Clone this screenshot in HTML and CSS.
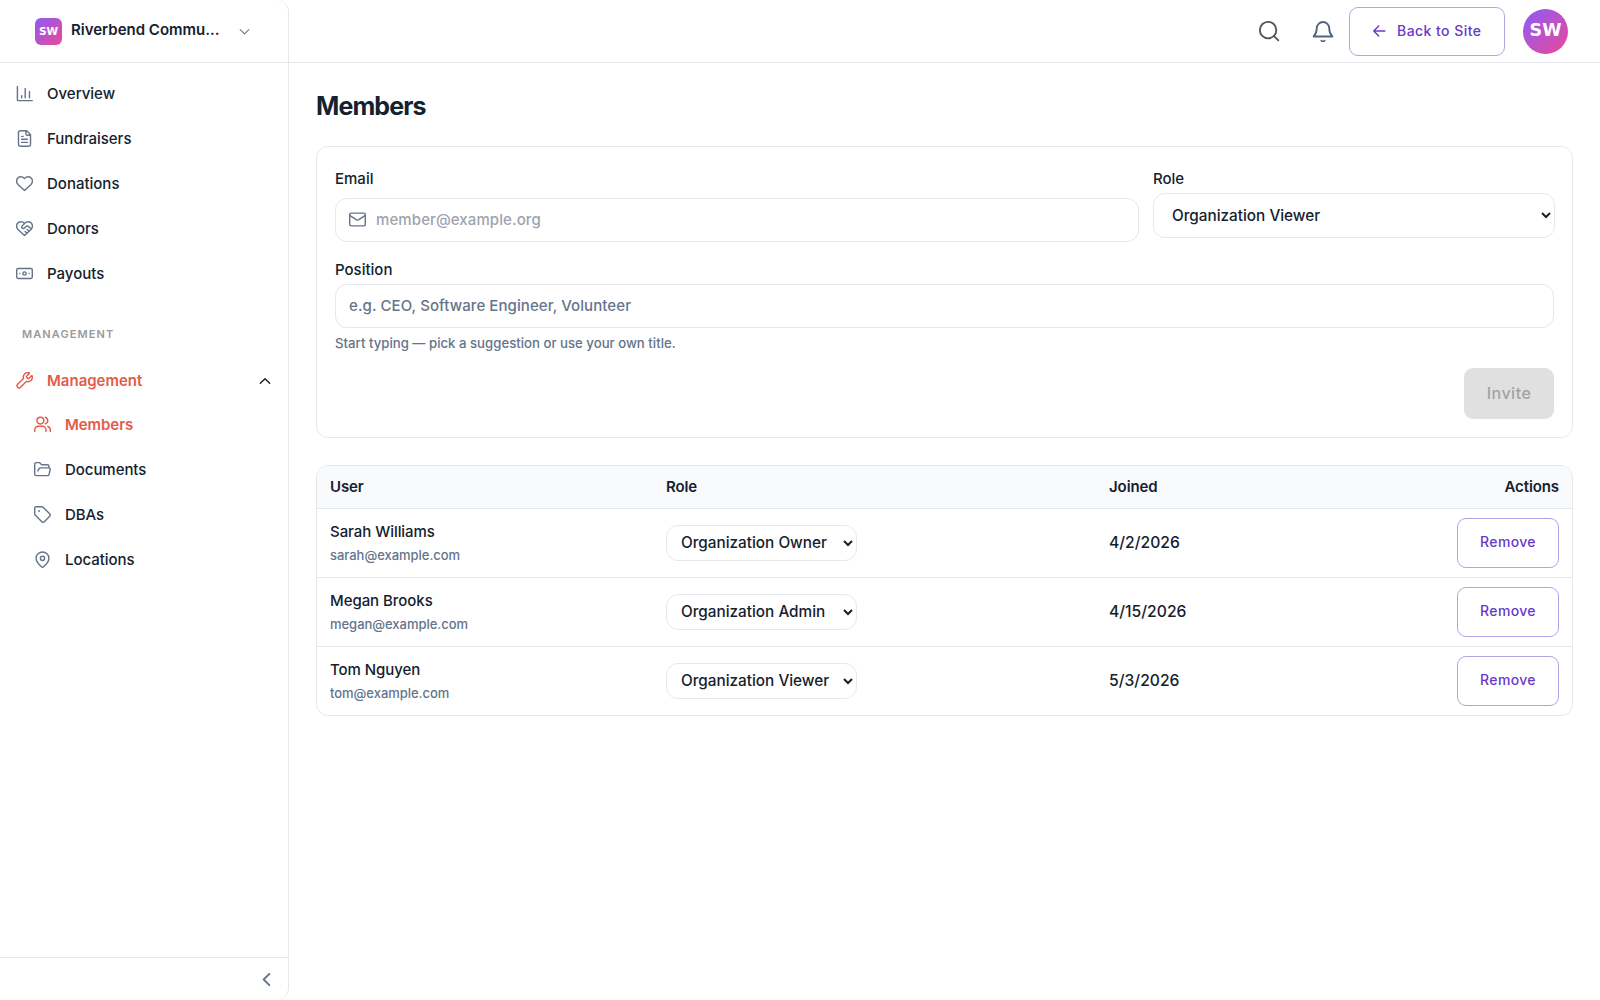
FILE: index.html
```html
<!DOCTYPE html>
<html lang="en">
<head>
<meta charset="utf-8">
<title>Members</title>
<link rel="stylesheet" href="styles.css">
</head>
<body>
<svg class="sprite" width="0" height="0">
  <defs>
    <symbol id="chart" viewBox="0 0 24 24"><path d="M2 2v19a1 1 0 0 0 1 1h20M8 18v-3M13 18V5M19 18V9"/></symbol>
    <symbol id="file" viewBox="0 0 24 24"><path d="M15 1H6a2.500 2.500 0 0 0-2.500 2.500v17A2.500 2.500 0 0 0 6 23h12a2.500 2.500 0 0 0 2.500-2.500V6.500zM14 1v4.500a2 2 0 0 0 2 2h4.500M10 9H8M16 13H8M16 17.500H8"/></symbol>
    <symbol id="heart" viewBox="0 0 24 24"><path d="M20.500 14c1.500-1.500 2.700-3.200 2.700-5.500A6 6 0 0 0 17 2.500c-1.900 0-3.300.6-5 2.300-1.700-1.700-3.100-2.300-5-2.300A6 6 0 0 0 .8 8.500c0 2.300 1.300 4.100 2.700 5.500l8.500 8z"/></symbol>
    <symbol id="donor" viewBox="0 0 24 24"><path d="M20.500 14c1.500-1.500 2.700-3.200 2.700-5.500A6 6 0 0 0 17 2.500c-1.900 0-3.300.6-5 2.300-1.700-1.700-3.100-2.300-5-2.300A6 6 0 0 0 .8 8.500c0 2.300 1.300 4.100 2.700 5.500l8.500 8zM12 4.800 8.700 8.300a2.200 2.200 0 0 0 0 3.100c.85.850 2.200.85 3 .05L14 9.500a3 3 0 0 1 4 0l3.500 3.300M18.500 16l-2.500-2.500M15.500 18.800l-2.600-2.500"/></symbol>
    <symbol id="cash" viewBox="0 0 24 24"><rect x="1" y="5" width="22" height="14" rx="2"/><circle cx="12" cy="12" r="2.300"/><path d="M5.500 12h.01M18.500 12h.01"/></symbol>
    <symbol id="wrench" viewBox="0 0 24 24"><path d="M15 6a1 1 0 0 0 0 1.500L16.600 9.100a1 1 0 0 0 1.500 0l3.800-3.800c.3-.3.900-.2 1 .2a6.500 6.500 0 0 1-8.300 7.800L6 22a3 3 0 0 1-4.100-4.200l8.700-8.500a6.500 6.500 0 0 1 7.900-8.200c.4.1.5.600.2.900z"/></symbol>
    <symbol id="users" viewBox="0 0 24 24"><circle cx="9" cy="6.500" r="4.800"/><path d="M1 22v-2.500a5 5 0 0 1 5-5h6a5 5 0 0 1 5 5V22M16 1.900a4.800 4.800 0 0 1 0 9.200M23 22v-2.500a5 5 0 0 0-3.500-4.700"/></symbol>
    <symbol id="folder" viewBox="0 0 24 24"><path d="m5.500 14 1.700-3.200A2 2 0 0 1 9 9.700h12a2 2 0 0 1 1.900 2.500l-1.700 7a2 2 0 0 1-2 1.500H3a2 2 0 0 1-2-2V4.300a2 2 0 0 1 2-2h4.200a2 2 0 0 1 1.700.9l.9 1.300a2 2 0 0 0 1.700.9H19a2 2 0 0 1 2 2v2.300"/></symbol>
    <symbol id="tag" viewBox="0 0 24 24"><path d="M12.800 1.700A2 2 0 0 0 11.300 1H3a2 2 0 0 0-2 2v8.300a2 2 0 0 0 .7 1.500l9.300 9.300a2.600 2.600 0 0 0 3.600 0l7.500-7.500a2.600 2.600 0 0 0 0-3.600z"/><circle cx="7" cy="7" r=".5"/></symbol>
    <symbol id="pin" viewBox="0 0 24 24"><path d="M21 10.300c0 5-5.600 10.300-8 12.200a1.500 1.500 0 0 1-2 0c-2.400-1.900-8-7.200-8-12.200a9 9 0 0 1 18 0z"/><circle cx="12" cy="10.300" r="3"/></symbol>
    <symbol id="mail" viewBox="0 0 24 24"><rect x="1" y="3" width="22" height="18" rx="2"/><path d="m1.500 6.500 9.200 6a2.500 2.500 0 0 0 2.600 0l9.200-6"/></symbol>
    <symbol id="search" viewBox="0 0 24 24"><circle cx="11" cy="11" r="9"/><path d="m17.500 17.500 4.700 4.700"/></symbol>
    <symbol id="bell" viewBox="0 0 24 24"><path d="M10.300 22.500a2 2 0 0 0 3.400 0M1.800 18h20.400c-2.400-2.500-3.400-4-3.400-9a6.800 6.800 0 0 0-13.600 0c0 5-1 6.500-3.400 9z"/></symbol>
    <symbol id="arrow" viewBox="0 0 24 24"><path d="m11.500 3.500-8.500 8.500 8.500 8.500M3 12h19"/></symbol>
    <symbol id="down" viewBox="0 0 24 24"><path d="m4 8.500 8 8 8-8"/></symbol>
    <symbol id="up" viewBox="0 0 24 24"><path d="m4 16 8-8 8 8"/></symbol>
    <symbol id="left" viewBox="0 0 24 24"><path d="m16 4-8 8 8 8"/></symbol>
  </defs>
</svg>
<div class="app">
  <aside class="sidebar">
    <div class="org">
      <span class="org-logo">SW</span>
      <span class="org-name">Riverbend Commu...</span>
      <svg class="icon org-caret"><use href="#down"/></svg>
    </div>
    <nav class="nav">
      <a class="item"><svg class="icon"><use href="#chart"/></svg>Overview</a>
      <a class="item"><svg class="icon"><use href="#file"/></svg>Fundraisers</a>
      <a class="item"><svg class="icon"><use href="#heart"/></svg>Donations</a>
      <a class="item"><svg class="icon"><use href="#donor"/></svg>Donors</a>
      <a class="item"><svg class="icon"><use href="#cash"/></svg>Payouts</a>
      <div class="group">MANAGEMENT</div>
      <a class="item active parent"><svg class="icon"><use href="#wrench"/></svg>Management<svg class="icon caret"><use href="#up"/></svg></a>
      <a class="item sub active"><svg class="icon"><use href="#users"/></svg>Members</a>
      <a class="item sub"><svg class="icon"><use href="#folder"/></svg>Documents</a>
      <a class="item sub"><svg class="icon"><use href="#tag"/></svg>DBAs</a>
      <a class="item sub"><svg class="icon"><use href="#pin"/></svg>Locations</a>
    </nav>
    <div class="collapse"><svg class="icon"><use href="#left"/></svg></div>
  </aside>
  <div class="page">
    <header class="topbar">
      <svg class="icon search"><use href="#search"/></svg>
      <svg class="icon bell"><use href="#bell"/></svg>
      <button class="outline back"><svg class="icon"><use href="#arrow"/></svg>Back to Site</button>
      <span class="avatar">SW</span>
    </header>
    <main class="main">
      <h1 class="title">Members</h1>
      <form class="card">
        <div class="fields">
          <div class="field email">
            <label class="label">Email</label>
            <div class="input"><svg class="icon"><use href="#mail"/></svg><span class="placeholder">member@example.org</span></div>
          </div>
          <div class="field">
            <label class="label">Role</label>
            <select class="select"><option>Organization Viewer</option></select>
          </div>
        </div>
        <div class="field">
          <label class="label">Position</label>
          <div class="input"><span class="hint">e.g. CEO, Software Engineer, Volunteer</span></div>
          <p class="help">Start typing — pick a suggestion or use your own title.</p>
        </div>
        <div class="submit"><button class="invite" type="button" disabled>Invite</button></div>
      </form>
      <div class="table">
        <div class="row head"><span>User</span><span>Role</span><span>Joined</span><span class="end">Actions</span></div>
        <div class="row">
          <div><div class="name">Sarah Williams</div><div class="mail">sarah@example.com</div></div>
          <div><select class="select small"><option>Organization Owner</option></select></div>
          <div class="date">4/2/2026</div>
          <div class="end"><button class="outline">Remove</button></div>
        </div>
        <div class="row">
          <div><div class="name">Megan Brooks</div><div class="mail">megan@example.com</div></div>
          <div><select class="select small"><option>Organization Admin</option></select></div>
          <div class="date">4/15/2026</div>
          <div class="end"><button class="outline">Remove</button></div>
        </div>
        <div class="row">
          <div><div class="name">Tom Nguyen</div><div class="mail">tom@example.com</div></div>
          <div><select class="select small"><option>Organization Viewer</option></select></div>
          <div class="date">5/3/2026</div>
          <div class="end"><button class="outline">Remove</button></div>
        </div>
      </div>
    </main>
  </div>
</div>
</body>
</html>
```
FILE: styles.css
```css
* { box-sizing: border-box; }
body { margin: 0; background: #fff; color: #14212e; font: 500 15px/20px Inter, "Liberation Sans", sans-serif; }
button, select { font: inherit; color: inherit; }
.sprite { display: block; height: 0; }
.icon { width: 17px; height: 17px; flex: none; fill: none; stroke: currentColor; stroke-width: 2; stroke-linecap: round; stroke-linejoin: round; }
.app { display: flex; height: 1000px; overflow: hidden; }
.sidebar { width: 289px; flex: none; display: flex; flex-direction: column; border-right: 1px solid #e5e8eb; border-radius: 0 12px 12px 0; }
.org { height: 63px; flex: none; display: flex; align-items: center; padding: 0 37px 0 35px; border-bottom: 1px solid #e5e8eb; font-weight: 600; }
.org-logo { width: 27px; height: 27px; border-radius: 6px; display: grid; place-items: center; color: #fff; font: 700 10.5px/1 "DejaVu Sans", sans-serif; background: linear-gradient(135deg, #8b5cf6, #ec4899); }
.org-name { margin-left: 9px; padding-bottom: 2px; }
.org-caret { width: 13px; height: 13px; margin-left: auto; color: #777; }
.nav { flex: 1; padding: 8px 0; }
.item { display: flex; align-items: center; height: 45px; padding: 0 16px; gap: 14px; }
.item .icon { color: #64748b; }
.item.active { font-weight: 600; color: #e65a4a; }
.item.active .icon { color: #e65a4a; }
.item.sub { padding-left: 34px; letter-spacing: -.05px; }
.item.parent { height: 43px; }
.item.active .caret { width: 14px; height: 14px; margin-left: auto; color: #14212e; stroke-width: 2.4; }
.group { height: 63px; padding: 30px 0 0 22px; font-size: 11px; line-height: 16px; font-weight: 600; letter-spacing: 1.1px; color: #999; }
.collapse { height: 43px; flex: none; border-top: 1px solid #e5e8eb; display: flex; align-items: center; justify-content: flex-end; padding-right: 13px; color: #64748b; }
.collapse .icon { stroke-width: 2.7; }
.page { flex: 1; min-width: 0; }
.topbar { height: 63px; border-bottom: 1px solid #e5e8eb; display: flex; align-items: center; justify-content: flex-end; padding: 0 32px 0 0; }
.topbar .search { width: 22px; height: 22px; color: #555; margin-right: 32px; }
.topbar .bell { width: 22px; height: 22px; color: #52657a; margin-right: 15px; }
.outline { height: 50px; border: 1px solid #b5a1e8; border-radius: 9px; background: #fff; color: #6938c9; font-size: 14px; letter-spacing: .35px; padding: 0 22px 2px; width: 102px; }
.back { width: 156px; height: 49px; display: flex; align-items: center; gap: 11px; padding-bottom: 1px; letter-spacing: .45px; }
.back .icon { width: 14px; height: 14px; stroke-width: 2.4; }
.avatar { width: 45px; height: 45px; margin-left: 18px; border-radius: 50%; display: grid; place-items: center; color: #fff; font: 700 17.5px/1 "DejaVu Sans", sans-serif; background: linear-gradient(135deg, #8b5cf6, #ec4899); }
.main { padding: 27px 27px; }
.title { margin: 0 0 23px; font-size: 25px; line-height: 33px; font-weight: 700; letter-spacing: -.9px; }
.card { height: 292px; border: 1px solid #e5e8eb; border-radius: 12px; padding: 18px; }
.fields { display: grid; grid-template-columns: 804px 402px; gap: 14px; height: 91px; align-items: start; }
.label { display: block; height: 28px; line-height: 27px; }
.email .label { height: 33px; }
.input { display: flex; align-items: center; height: 44px; border: 1px solid #e5e8eb; border-radius: 12px; padding: 0 13px 1px; gap: 10px; }
.input .icon { color: #64748b; }
.placeholder { color: #9ca3af; letter-spacing: .1px; }
.hint { color: #64748b; letter-spacing: .08px; }
.select { display: block; width: 100%; height: 45px; background: #fff; border: 1px solid #e5e8eb; border-radius: 12px; padding: 0 0 1px 14px; font-size: 15.3px; }
.select.small { width: 191px; height: 36px; padding-left: 10px; }
.help { margin: 5px 0 0; font-size: 13.2px; color: #64748b; }
.submit { display: flex; justify-content: flex-end; margin-top: 15px; }
.invite { width: 90px; height: 51px; border: 0; border-radius: 9px; background: #e0e0e0; color: #a3a3a3; font-size: 16px; letter-spacing: .5px; padding-bottom: 3px; }
.table { margin-top: 27px; border: 1px solid #e5e8eb; border-radius: 12px; overflow: hidden; }
.row { display: grid; grid-template-columns: 336px 443px 1fr 160px; align-items: center; height: 69px; padding: 0 13px; }
.row + .row { border-top: 1px solid #e5e8eb; }
.head { height: 42px; background: #f8fafc; font-weight: 600; letter-spacing: -.1px; }
.end { text-align: right; }
.name { letter-spacing: -.05px; }
.date { font-size: 15.7px; }
.mail { font-size: 13px; color: #64748b; margin-top: 3px; letter-spacing: -.03px; }
```
